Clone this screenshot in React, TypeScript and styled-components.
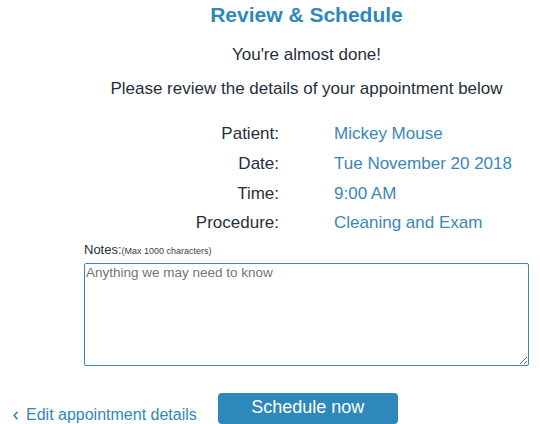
import React from "react";
import styled, { createGlobalStyle } from "styled-components";

const Global = createGlobalStyle`
  html, body { margin: 0; padding: 0; background: #fff; }
  body { font-family: "Liberation Sans", Arial, sans-serif; color: #1f2f3d; }
  * { box-sizing: border-box; }
`;

const Page = styled.div`
  width: 540px;
  height: 424px;
  overflow: hidden;
  display: flex;
  flex-direction: column;
`;

const Content = styled.div`
  margin-left: 84px;
  width: 445px;
  display: flex;
  flex-direction: column;
`;

const Title = styled.h1`
  margin: 3px 0 0;
  font-size: 21px;
  font-weight: bold;
  color: #2e88bb;
  text-align: center;
  line-height: 23.5px;
`;

const Lead = styled.p<{ $top: number }>`
  margin: ${(p) => p.$top}px 0 0;
  font-size: 17px;
  line-height: 19px;
  text-align: center;
  color: #1f2f3d;
`;

const Details = styled.div`
  margin-top: 21.5px;
  display: grid;
  grid-template-columns: 195px 1fr;
  column-gap: 55px;
  grid-auto-rows: 29.7px;
  align-items: center;
  font-size: 17px;
`;

const Label = styled.div`
  text-align: right;
  color: #1f2f3d;
`;

const Value = styled.div`
  color: #3a87b8;
`;

const NotesLabel = styled.div`
  margin-top: 4px;
  display: flex;
  align-items: baseline;
  font-size: 13px;
  line-height: 15px;
  color: #1f2f3d;
`;

const Small = styled.span`
  font-size: 9px;
  color: #3a3f46;
`;

const Notes = styled.textarea`
  margin-top: 4px;
  width: 445px;
  height: 103px;
  border: 1px solid #3b87b6;
  border-radius: 2px;
  padding: 1px 1px;
  font-family: "Liberation Sans", Arial, sans-serif;
  font-size: 13.5px;
  color: #333;
  outline: none;
  resize: both;
  &::placeholder { color: #757575; }
`;

const Footer = styled.div`
  margin-top: 27px;
  padding-left: 13px;
  display: flex;
  align-items: flex-end;
  gap: 21px;
`;

const BackLink = styled.a`
  display: flex;
  align-items: center;
  gap: 7px;
  font-size: 16px;
  color: #2f87ba;
  text-decoration: none;
  cursor: pointer;
  line-height: 18px;
  svg { margin-top: 1px; }
`;

const Button = styled.button`
  width: 180px;
  height: 31px;
  border: none;
  border-radius: 4px;
  background: #2d88bb;
  color: #fff;
  font-family: "Liberation Sans", Arial, sans-serif;
  font-size: 18px;
  cursor: pointer;
  padding: 0 0 3px;
`;

const rows: [string, string][] = [
  ["Patient:", "Mickey Mouse"],
  ["Date:", "Tue November 20 2018"],
  ["Time:", "9:00 AM"],
  ["Procedure:", "Cleaning and Exam"],
];

export default function App() {
  return (
    <Page>
      <Global />
      <Content>
        <Title>Review &amp; Schedule</Title>
        <Lead $top={18.5}>You're almost done!</Lead>
        <Lead $top={15}>Please review the details of your appointment below</Lead>
        <Details>
          {rows.map(([l, v]) => (
            <React.Fragment key={l}>
              <Label>{l}</Label>
              <Value>{v}</Value>
            </React.Fragment>
          ))}
        </Details>
        <NotesLabel>
          Notes:<Small>(Max 1000 characters)</Small>
        </NotesLabel>
        <Notes placeholder="Anything we may need to know" />
      </Content>
      <Footer>
        <BackLink>
          <svg width="6" height="9" viewBox="0 0 6 9">
            <path d="M4.5 0.8 L1.2 4.5 L4.5 8.2" fill="none" stroke="#2f87ba" strokeWidth="1.6" />
          </svg>
          Edit appointment details
        </BackLink>
        <Button>Schedule now</Button>
      </Footer>
    </Page>
  );
}
